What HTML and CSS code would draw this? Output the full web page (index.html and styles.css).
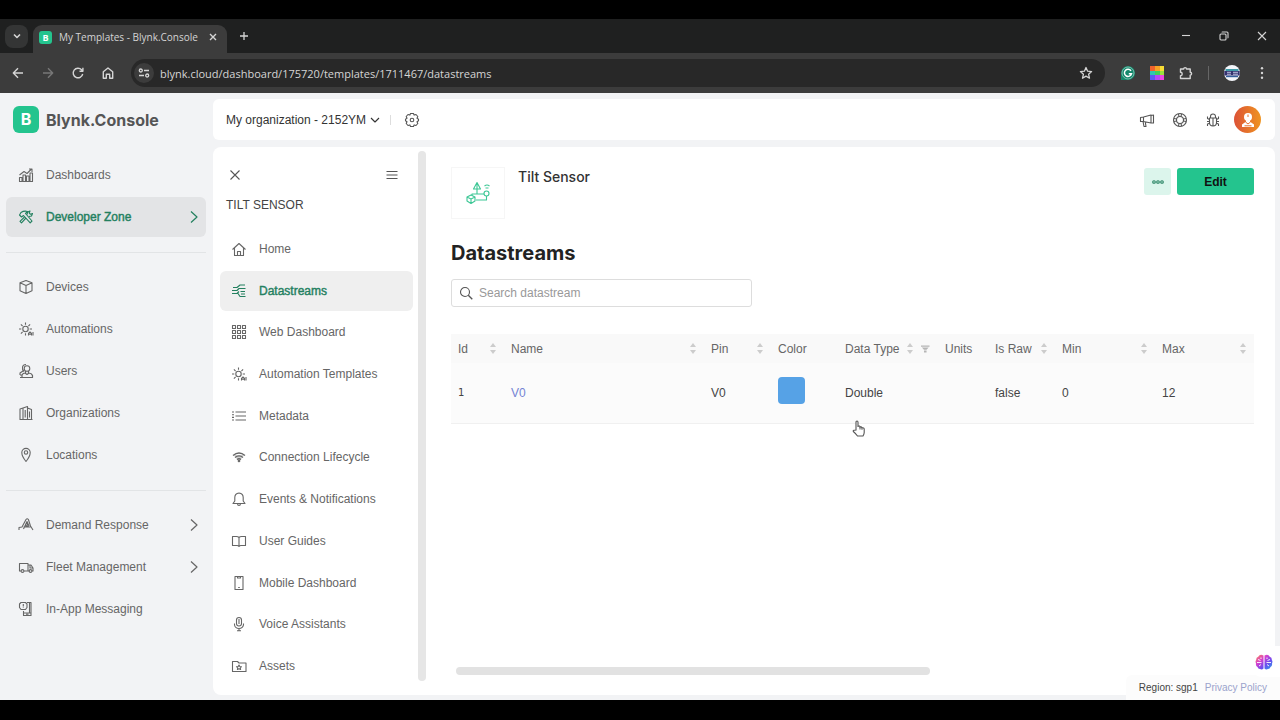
FILE: index.html
```html
<!DOCTYPE html>
<html lang="en">
<head>
  <meta charset="UTF-8">
  <meta name="viewport" content="width=device-width, initial-scale=1">
  <title>My Templates - Blynk.Console</title>
  <link rel="stylesheet" href="styles.css">
</head>
<body>

<!-- Browser window -->
<header class="browser">
  <div class="tab-strip">
    <button class="tab-search" aria-label="Search tabs">
      <svg class="icon" width="10" height="10" viewBox="0 0 10 10"><path d="M2 3.5l3 3 3-3" stroke-width="1.6"/></svg>
    </button>
    <div class="tab">
      <span class="favicon">B</span>
      <span class="tab-title">My Templates - Blynk.Console</span>
      <button class="tab-close" aria-label="Close tab">
        <svg class="icon" width="8" height="8" viewBox="0 0 8 8"><path d="M1 1l6 6M7 1l-6 6" stroke-width="1.4"/></svg>
      </button>
    </div>
    <button class="new-tab" aria-label="New tab">
      <svg class="icon" width="10" height="10" viewBox="0 0 10 10"><path d="M5 1v8M1 5h8" stroke-width="1.3"/></svg>
    </button>
    <div class="window-buttons">
      <button aria-label="Minimize"><svg class="icon" width="10" height="10" viewBox="0 0 10 10"><path d="M1 4.5h8"/></svg></button>
      <button aria-label="Restore"><svg class="icon" width="10" height="10" viewBox="0 0 10 10"><rect x="1" y="3" width="6" height="6" rx="1"/><path d="M3 1.500Q3 1 3.500 1H8q1 0 1 1v4.500q0 .5-.5.500"/></svg></button>
      <button aria-label="Close"><svg class="icon" width="10" height="10" viewBox="0 0 10 10"><path d="M1 1l8 8M9 1l-8 8"/></svg></button>
    </div>
  </div>

  <div class="toolbar">
    <button aria-label="Back"><svg class="icon" width="14" height="14" viewBox="0 0 14 14"><path d="M12 7H2.500M7 2.300L2.300 7 7 11.700" stroke-width="1.4"/></svg></button>
    <button class="dim" aria-label="Forward"><svg class="icon" width="14" height="14" viewBox="0 0 14 14"><path d="M2 7h9.500M7 2.300L11.700 7 7 11.700" stroke-width="1.4"/></svg></button>
    <button aria-label="Reload"><svg class="icon" width="14" height="14" viewBox="0 0 14 14"><path d="M11.700 8A4.800 4.800 0 1 1 10.600 3.800L11.800 5M11.900 1.800V5.200H8.500" stroke-width="1.4"/></svg></button>
    <button aria-label="Home page"><svg class="icon" width="14" height="14" viewBox="0 0 14 14"><path d="M2.300 5.800L7 2l4.700 3.800V12.300H8.700V8.200H5.300v4.100h-3z" stroke-width="1.4"/></svg></button>
    <div class="address">
      <span class="site-info"><svg class="icon" width="12" height="12" viewBox="0 0 12 12"><g stroke-width="1.300"><circle cx="2.800" cy="3.500" r="1.500"/><path d="M6 3.500h5M1 8.500h5"/><circle cx="9.200" cy="8.500" r="1.500"/></g></svg></span>
      <input type="text" aria-label="Address" value="blynk.cloud/dashboard/175720/templates/1711467/datastreams">
      <button aria-label="Bookmark"><svg class="icon" width="14" height="14" viewBox="0 0 14 14"><path d="M7 1.500l1.600 3.700 4 .4-3 2.700.9 3.900L7 10.100l-3.500 2.100.9-3.900-3-2.700 4-.4z" stroke-width="1.300"/></svg></button>
    </div>
    <div class="extensions">
      <svg width="14" height="14" viewBox="0 0 14 14"><path d="M7 0a7 7 0 1 1 0 14H0V7a7 7 0 0 1 7-7z" fill="#14876b"/><circle cx="7" cy="7" r="6" fill="none" stroke="#b9e4d8" stroke-width=".6"/><path d="M10 4.800A3.600 3.600 0 1 0 10.500 7.800H7.800" fill="none" stroke="#fff" stroke-width="1.500"/></svg>
      <svg width="14" height="14" viewBox="0 0 14 14"><path fill="#f0632d" d="M0 0h5v5H0z"/><path fill="#f7a325" d="M5 0h5v5H5z"/><path fill="#f7dc35" d="M10 0h4v5h-4z"/><path fill="#2fc6b0" d="M0 5h5v4H0z"/><path fill="#3fd35a" d="M5 5h5v4H5z"/><path fill="#9be23a" d="M10 5h4v4h-4z"/><path fill="#5a5cf0" d="M0 9h5v5H0z"/><path fill="#b44af5" d="M5 9h5v5H5z"/><path fill="#ee45e4" d="M10 9h4v5h-4z"/></svg>
      <svg class="icon" width="14" height="14" viewBox="0 0 14 14"><path d="M1.500 3h3.200a1.400 1.400 0 1 1 2.800 0h3.700v3.300a1.400 1.400 0 1 1 0 2.800v3.400H1.500V9.700a1.700 1.700 0 0 0 0-3.400z" stroke-width="1.400"/></svg>
      <span class="separator"></span>
      <svg width="16" height="16" viewBox="0 0 16 16"><circle cx="8" cy="8" r="8" fill="#f4f6fb"/><path d="M1.500 4h13v2.500h-13z" fill="#3d9aa8"/><path d="M.3 6h15.400v4.500H.3z" fill="#35326e"/><path d="M3 7.300h4M3 9.200h4M9 7.300h5M9 9.200h5" stroke="#dfe4ff" stroke-width=".8"/><path d="M2 11.500h12" stroke="#355e9c" stroke-width="1.400"/></svg>
      <svg width="14" height="14" viewBox="0 0 14 14" fill="#d5d5d5"><circle cx="7" cy="2.200" r="1.200"/><circle cx="7" cy="7" r="1.200"/><circle cx="7" cy="11.800" r="1.200"/></svg>
    </div>
  </div>
</header>

<!-- Console -->
<div class="app">
  <aside class="sidebar">
    <a class="brand" href="#"><span class="brand-mark">B</span>Blynk.Console</a>
    <nav class="nav">
      <a class="nav-item" href="#">
        <svg class="icon" width="16" height="16" viewBox="0 0 16 16"><path d="M1.500 14.500v-4h2.500v4zM5 14.500V8h2.500v6.500zM8.500 14.500V9H11v5.500zM12 14.500V6h2.500v8.500zM1.500 8L6 4.500 9 6.500l4.500-4.500M11 2h3v3"/></svg>
        Dashboards
      </a>
      <a class="nav-item active" href="#">
        <svg class="icon" width="16" height="16" viewBox="0 0 16 16"><path d="M1.500 6L3 3.500Q6 1.500 9.500 2.500L7.500 4.500 14 12l-1.800 1.800L5.500 6.500 3.500 8z"/><path d="M11 7.500l2.500-.5 1-2.500-2 .8-1.300-1.300.8-2-2.300 1L9 5.500M8 9l-4.500 4.800L2 12.300 6.500 8"/></svg>
        Developer Zone
        <svg class="icon chevron" width="8" height="14" viewBox="0 0 8 14"><path d="M1 1.500L7 7l-6 5.500" stroke-width="1.200"/></svg>
      </a>
      <hr>
      <a class="nav-item" href="#">
        <svg class="icon" width="16" height="16" viewBox="0 0 16 16"><path d="M8 1.500l6 2.300v8L8 14.500 2 11.800v-8zM2 3.800L8 6.500l6-2.700M8 6.500v8"/></svg>
        Devices
      </a>
      <a class="nav-item" href="#">
        <svg class="icon" width="16" height="16" viewBox="0 0 16 16"><circle cx="7.500" cy="8" r="2.700"/><path d="M7.500 1.500v2.300M7.500 12.200v2.300M1 8h2.300M11.700 8H14M2.900 3.400l1.700 1.700M12.100 3.400l-1.700 1.700M2.900 12.600l1.700-1.700M10.500 14.500v-2l1.500-1.500 1.500 1.500v2M10.500 13.300h3M15 11v3.500"/></svg>
        Automations
      </a>
      <a class="nav-item" href="#">
        <svg class="icon" width="16" height="16" viewBox="0 0 16 16"><path d="M6 8.500Q4 6.500 4.500 4 5 1.500 8 1.500M2 12V10l3-2"/><circle cx="9" cy="5.500" r="2.800"/><path d="M4 14.500V12q1-2 3-2l2 1.500 2-1.500q3 .5 3.500 2.500v2zM2 14.500h12M7.500 8v2M10.500 8v2M2 12h2" stroke-width="1.200"/></svg>
        Users
      </a>
      <a class="nav-item" href="#">
        <svg class="icon" width="16" height="16" viewBox="0 0 16 16"><path d="M2 14.500V4l3-1v11.500M5 3l4.500-1.500v13M9.500 3l4 1.500v10M1.500 14.500h13M7.200 5v7.500M11.500 6.500v6"/></svg>
        Organizations
      </a>
      <a class="nav-item" href="#">
        <svg class="icon" width="16" height="16" viewBox="0 0 16 16"><path d="M8 14.500Q3.800 9.500 3.800 5.600a4.200 4.200 0 0 1 8.400 0Q12.200 9.500 8 14.500z"/><circle cx="8" cy="5.500" r="1.700"/></svg>
        Locations
      </a>
      <hr>
      <a class="nav-item" href="#">
        <svg class="icon" width="16" height="16" viewBox="0 0 16 16"><path d="M1 13v-2.500l3-.5 4-7.500q1.200-1.500 2.400 0L12.500 9l2.500 4M5.500 12L9 4.500l2 4.500M5.500 10h7M9.200 6v3.500M7.700 8.500l1.500 1.500 1.500-1.500"/></svg>
        Demand Response
        <svg class="icon chevron" width="8" height="14" viewBox="0 0 8 14"><path d="M1 1.500L7 7l-6 5.500" stroke-width="1.200"/></svg>
      </a>
      <a class="nav-item" href="#">
        <svg class="icon" width="16" height="16" viewBox="0 0 16 16"><path d="M3 12H1.500V4.500H10V12H6M10 6h3l2 3v3h-1M12 12h-2M12 6v3h3"/><circle cx="4.500" cy="12" r="1.400"/><circle cx="12.500" cy="12" r="1.400"/></svg>
        Fleet Management
        <svg class="icon chevron" width="8" height="14" viewBox="0 0 8 14"><path d="M1 1.500L7 7l-6 5.500" stroke-width="1.200"/></svg>
      </a>
      <a class="nav-item" href="#">
        <svg class="icon" width="16" height="16" viewBox="0 0 16 16"><path d="M9 1.500h4v13H5.500V10M11.500 1.500v10.500M6 12h7M3 1.500h4.500L9 3v3.500L7.500 8.500H3L1.500 6.500V3zM5.300 3v2.500M5.300 6.500v.6M8 13.300h2.500"/></svg>
        In-App Messaging
      </a>
    </nav>
  </aside>

  <div class="workspace">
    <div class="topbar">
      <button class="org-picker">
        My organization - 2152YM
        <svg class="icon" width="10" height="8" viewBox="0 0 10 8"><path d="M1 2l4 4 4-4"/></svg>
      </button>
      <span class="separator"></span>
      <button aria-label="Settings"><svg class="icon" width="16" height="16" viewBox="0 0 16 16"><path d="M6.500 1.500h3l.6 1.600 1.900-.6 1.800 2-.8 1.800 1.500.9v1.600l-1.500.9.8 1.800-1.800 2-1.900-.6-.6 1.600h-3l-.6-1.600-1.900.6-1.800-2L3 9.700l-1.500-.9V7.200L3 6.300l-.8-1.800 1.800-2 1.900.6z"/><circle cx="8" cy="8" r="1.800"/></svg></button>
      <div class="topbar-actions">
        <button aria-label="News"><svg class="icon" width="16" height="16" viewBox="0 0 16 16"><path d="M1.500 5.500l3-.5L12 3v8L4.500 9.500l-3 0zM12 3.500l2.500-.5v8l-2.500 0M4.500 5v4.500M4 9.500l1 5h2l-.7-4.500M14.500 5.500v2"/></svg></button>
        <button aria-label="Help"><svg class="icon" width="16" height="16" viewBox="0 0 16 16"><circle cx="8" cy="8" r="6.500"/><circle cx="8" cy="8" r="3.500"/><path d="M6.500 1.800l.5 2.800M9.500 1.800L9 4.600M6.500 14.200l.5-2.800M9.500 14.200L9 11.400M1.800 6.500l2.800.5M1.800 9.500L4.600 9M14.200 6.500l-2.800.5M14.200 9.500L11.400 9"/></svg></button>
        <button aria-label="Report a bug"><svg class="icon" width="16" height="16" viewBox="0 0 16 16"><path d="M4.500 6h7v4.500a3.500 3.500 0 0 1-7 0zM5.500 6V4.500a2.500 2.500 0 0 1 5 0V6M8 6v8M2.500 4.500v2l2 1M13.500 4.500v2l-2 1M2 9.500h2.500M11.500 9.500H14M2.500 14v-2l2-.8M13.500 14v-2l-2-.8"/></svg></button>
        <button class="avatar" aria-label="Account">
          <svg width="16" height="16" viewBox="0 0 16 16"><circle cx="8" cy="5" r="4" fill="#fff"/><path d="M6 8h4v2.500H6zM2 15v-2.500L5.500 10h5l3.500 2.500V15z" fill="#fff"/><path d="M8 2.500V5M5.500 10L8 12l2.500-2M4.500 13.800h7" stroke="#e8702c" fill="none"/></svg>
        </button>
      </div>
    </div>

    <div class="content">
      <aside class="submenu">
        <div class="submenu-body">
          <div class="submenu-head">
            <button aria-label="Close"><svg class="icon" width="12" height="12" viewBox="0 0 12 12"><path d="M1.500 1.500l9 9M10.500 1.500l-9 9"/></svg></button>
            <button aria-label="Collapse menu"><svg class="icon" width="12" height="12" viewBox="0 0 12 12"><path d="M.5 2.500h11M.5 6h11M.5 9.500h11"/></svg></button>
          </div>
          <h2 class="submenu-title">TILT SENSOR</h2>
          <nav class="submenu-nav">
            <a class="submenu-item" href="#"><svg class="icon" width="16" height="16" viewBox="0 0 16 16"><path d="M1.500 8.500L8 2.500l6.500 6M3.500 7v7.500h9V7M6.500 14.500v-4h3v4"/></svg>Home</a>
            <a class="submenu-item active" href="#"><svg class="icon" width="16" height="16" viewBox="0 0 16 16"><path d="M2 4.500h4l3-2.500h5M1 7.500h5l2-2h6.500M9.500 8.500H14M1 10.500h5l2-2M3 10.500h4l2 3h5.500M10 11h4"/></svg>Datastreams</a>
            <a class="submenu-item" href="#"><svg class="icon" width="16" height="16" viewBox="0 0 16 16"><path d="M1.500 1.500h3v3h-3zM6.500 1.500h3v3h-3zM11.500 1.500h3v3h-3zM1.500 6.500h3v3h-3zM6.500 6.500h3v3h-3zM11.500 6.500h3v3h-3zM1.500 11.500h3v3h-3zM6.500 11.500h3v3h-3zM11.500 11.500h3v3h-3z"/></svg>Web Dashboard</a>
            <a class="submenu-item" href="#"><svg class="icon" width="16" height="16" viewBox="0 0 16 16"><circle cx="7.500" cy="8" r="2.700"/><path d="M7.500 1.500v2.300M7.500 12.200v2.300M1 8h2.300M11.700 8H14M2.900 3.400l1.700 1.700M12.100 3.400l-1.700 1.700M2.900 12.600l1.700-1.700M10.500 14.500v-2l1.500-1.500 1.500 1.500v2M10.500 13.300h3M15 11v3.500"/></svg>Automation Templates</a>
            <a class="submenu-item" href="#"><svg class="icon" width="16" height="16" viewBox="0 0 16 16"><path d="M1 4h2M1 6.700h2M1 9.400h2M1 12h2M4.500 4h10.500M4.500 8h10.500M4.500 12h10.500"/></svg>Metadata</a>
            <a class="submenu-item" href="#"><svg class="icon" width="16" height="16" viewBox="0 0 16 16"><path d="M2 6.500q6-5 12 0M4 8.500q4-3.300 8 0M6 10.500q2-1.500 4 0" stroke-width="1.400"/><path d="M3 6h10L8 13z" fill="currentColor" fill-opacity=".3" stroke="none"/><circle cx="8" cy="12" r=".8"/></svg>Connection Lifecycle</a>
            <a class="submenu-item" href="#"><svg class="icon" width="16" height="16" viewBox="0 0 16 16"><path d="M2 12.500h12l-1.800-2.500V6.500q0-4-4.200-4.500-4.200.5-4.200 4.500V10zM6.500 12.500q0 2 1.500 2t1.500-2"/></svg>Events &amp; Notifications</a>
            <a class="submenu-item" href="#"><svg class="icon" width="16" height="16" viewBox="0 0 16 16"><path d="M8 4.500Q7 3.500 5.500 3.500h-4v9h4.500q1.500 0 2 1 .5-1 2-1h4.500v-9h-4Q9 3.500 8 4.500v9"/></svg>User Guides</a>
            <a class="submenu-item" href="#"><svg class="icon" width="16" height="16" viewBox="0 0 16 16"><path d="M4 1.500h8v13H4zM6.500 2v1h3V2M7.200 12.500h1.600"/></svg>Mobile Dashboard</a>
            <a class="submenu-item" href="#"><svg class="icon" width="16" height="16" viewBox="0 0 16 16"><rect x="5.500" y="1.500" width="5" height="8.500" rx="2.500"/><path d="M3.500 7.500v1a4.500 4 0 0 0 9 0v-1M8 12.500v2.500M6 14.800h4M8 3v5"/></svg>Voice Assistants</a>
            <a class="submenu-item" href="#"><svg class="icon" width="16" height="16" viewBox="0 0 16 16"><path d="M1.500 13.500v-10h5l1.500 1.500h7v8.500zM8 7l.8 1.500 1.700.2-1.200 1.100.3 1.700L8 10.700l-1.600.8.3-1.700-1.200-1.100 1.700-.2z"/></svg>Assets</a>
          </nav>
        </div>
        <div class="scrollbar-y"></div>
      </aside>

      <main class="main">
        <div class="template-head">
          <div class="template-logo">
            <svg class="icon" width="26" height="24" viewBox="0 0 26 24"><path d="M12 1.500L15.500 8h-7zM12 3v10M9 8h6M19.500 5q2.500-2 5 0M20.500 7h3"/><circle cx="21.500" cy="12.500" r="2.500"/><path d="M7 14.500V13h12M21.500 15v4H11M6 14l4 2v4l-4 2.500L2 20v-4zM2 16l4 2 4-2M6 18v4.500"/></svg>
          </div>
          <h1 class="template-name">Tilt Sensor</h1>
          <div class="template-actions">
            <button class="more" aria-label="More"><svg class="icon" width="14" height="6" viewBox="0 0 14 6"><circle cx="3" cy="3" r="1.300"/><circle cx="7" cy="3" r="1.300"/><circle cx="11" cy="3" r="1.300"/></svg></button>
            <button class="edit">Edit</button>
          </div>
        </div>

        <h2 class="page-title">Datastreams</h2>
        <label class="search">
          <svg class="icon" width="14" height="14" viewBox="0 0 14 14"><circle cx="6" cy="6" r="4.500"/><path d="M9.300 9.300l4 4" stroke-width="1.300"/></svg>
          <input type="text" placeholder="Search datastream" aria-label="Search datastream">
        </label>

        <table class="streams">
          <colgroup>
            <col class="col-id"><col class="col-name"><col class="col-sm"><col class="col-sm"><col class="col-md"><col class="col-xs"><col class="col-sm"><col class="col-md"><col>
          </colgroup>
          <thead>
            <tr>
              <th><div class="th">Id<span class="sort"></span></div></th>
              <th><div class="th">Name<span class="sort"></span></div></th>
              <th><div class="th">Pin<span class="sort"></span></div></th>
              <th><div class="th">Color</div></th>
              <th><div class="th">Data Type<span class="sort"></span><svg class="filter" width="10" height="8" viewBox="0 0 10 8"><path d="M0 0h10v1.500H0zM1 2.300h8L6.500 5h-3zM3.500 5.700h3V8h-3z" fill="#b5b5b5"/></svg></div></th>
              <th><div class="th">Units</div></th>
              <th><div class="th">Is Raw<span class="sort"></span></div></th>
              <th><div class="th">Min<span class="sort"></span></div></th>
              <th><div class="th">Max<span class="sort"></span></div></th>
            </tr>
          </thead>
          <tbody>
            <tr>
              <td class="id">1</td>
              <td><a href="#">V0</a></td>
              <td>V0</td>
              <td><span class="swatch"></span></td>
              <td>Double</td>
              <td></td>
              <td>false</td>
              <td>0</td>
              <td>12</td>
            </tr>
          </tbody>
        </table>
        <div class="scrollbar-x"></div>
      </main>
    </div>
  </div>

  <footer class="footer">
    <span>Region: sgp1</span>
    <a href="#">Privacy Policy</a>
  </footer>

  <button class="assistant" aria-label="Assistant">
    <svg width="18" height="16" viewBox="0 0 18 16">
      <defs><linearGradient id="brain" x1="0" y1="0" x2="1" y2="1"><stop offset="0" stop-color="#ff8a4c"/><stop offset=".35" stop-color="#d63fd0"/><stop offset=".65" stop-color="#6a4df0"/><stop offset="1" stop-color="#2aa5e8"/></linearGradient></defs>
      <path d="M8.500 1.500v13q-1.500 1.500-3.500.5-2 0-2.500-2Q.5 12 1 9.500 0 7.500 1.200 6 1 3.500 3.200 2.800 5-.5 8.500 1.500zM9.500 1.500q3.500-2 5.300 1.300Q17 3.500 16.800 6 18 7.500 17 9.500q.5 2.500-1.500 3.500-.5 2-2.500 2-2 1-3.500-.5z" fill="url(#brain)"/>
      <path d="M3 5.500l2.500 1M2 8.500h4.500M4 12l2-1.500M15 5.500l-2.500 1M11.500 8.500H16M14 12l-2-1.500M6 3.500v1.500M12 3.500v1.500" stroke="#fff" stroke-width=".9" fill="none"/>
    </svg>
  </button>

  <svg class="cursor" width="14" height="18" viewBox="0 0 14 18"><path d="M4 10V2.200q0-1.200 1-1.200t1 1.200V7l.2-1q1.600-.3 1.800 1 1.600-.4 2 .8 2-.3 2.200 1.200v3.500q0 1.500-1.200 3.500H5.500Q4 13.800 1.300 11.500q-.3-1.500 1-1.300z" fill="#fff" stroke="#555" stroke-width="1.100"/><path d="M8 7v2.500M10 7.800v2" stroke="#555"/></svg>
</div>

</body>
</html>
```

FILE: styles.css
```css
* {
  box-sizing: border-box;
}
body {
  margin: 0;
  padding: 19px 0 20px;
  height: 100vh;
  display: flex;
  flex-direction: column;
  background: #000;
  font-family: "Liberation Sans", Arial, sans-serif;
  font-size: 12px;
  color: #444;
}
button {
  display: flex;
  align-items: center;
  justify-content: center;
  padding: 0;
  border: none;
  background: none;
  color: inherit;
  font: inherit;
  cursor: pointer;
}
a {
  text-decoration: none;
}
h1, h2 {
  margin: 0;
}
.icon {
  flex: none;
  fill: none;
  stroke: currentColor;
  stroke-width: 1.1;
  stroke-linejoin: round;
}

/* Browser window */
.browser {
  font-family: "Open Sans", sans-serif;
  color: #d5d5d5;
}
.tab-strip {
  display: flex;
  align-items: center;
  height: 34px;
  padding: 0 13px 0 5px;
  background: #1f2020;
}
.tab-search {
  width: 23px;
  height: 23px;
  border-radius: 8px;
  background: #343535;
}
.tab {
  display: flex;
  align-items: center;
  align-self: flex-end;
  width: 194px;
  height: 28px;
  margin-left: 5px;
  padding: 0 10px 4px 6px;
  border-radius: 9px 9px 0 0;
  background: #3c3c3c;
  font-size: 10px;
}
.favicon {
  flex: none;
  width: 13px;
  height: 13px;
  margin-right: 7px;
  border-radius: 3px;
  background: #24c48e;
  color: #fff;
  font-size: 9px;
  font-weight: bold;
  line-height: 13px;
  text-align: center;
}
.tab-title {
  flex: 1;
  white-space: nowrap;
}
.new-tab {
  margin-left: 12px;
}
.window-buttons {
  display: flex;
  gap: 28px;
  margin-left: auto;
}
.toolbar {
  display: flex;
  align-items: center;
  gap: 16px;
  height: 40px;
  padding: 0 11px;
  background: #3c3c3c;
}
.toolbar .dim {
  color: #777;
}
.address {
  flex: 1;
  display: flex;
  align-items: center;
  height: 28px;
  padding: 0 12px 0 3px;
  border-radius: 14px;
  background: #282828;
}
.site-info {
  display: flex;
  align-items: center;
  justify-content: center;
  width: 20px;
  height: 20px;
  border-radius: 10px;
  background: #3c3c3c;
}
.address input {
  flex: 1;
  padding: 0 6px;
  border: none;
  background: none;
  color: #d5d5d5;
  font: 11px "Open Sans", sans-serif;
}
.extensions {
  display: flex;
  align-items: center;
  gap: 15px;
}
.extensions .separator {
  width: 1px;
  height: 14px;
  background: #666;
}

/* Console */
.app {
  position: relative;
  flex: 1;
  display: flex;
  min-height: 0;
  background: #f2f3f5;
}
.sidebar {
  width: 213px;
  padding: 13px 7px 0 6px;
}
.brand {
  display: flex;
  align-items: center;
  gap: 7px;
  padding-left: 7px;
  color: #555;
  font-family: Inter, sans-serif;
  font-size: 16px;
  font-weight: bold;
}
.brand-mark {
  width: 26px;
  height: 27px;
  border-radius: 6px;
  background: #24c48e;
  color: #fff;
  line-height: 27px;
  text-align: center;
}
.nav {
  display: flex;
  flex-direction: column;
  gap: 2px;
  margin-top: 22px;
}
.nav hr {
  width: 100%;
  margin: 13px 0 12px;
  border: none;
  border-top: 1px solid #e2e4e6;
}
.nav-item {
  display: flex;
  align-items: center;
  gap: 12px;
  height: 40px;
  padding: 0 8px 0 12px;
  border-radius: 6px;
  color: #666;
}
.nav-item.active {
  background: #e3e4e6;
  color: #23805f;
  -webkit-text-stroke: 0.4px;
}
.chevron {
  margin-left: auto;
}
.workspace {
  flex: 1;
  display: flex;
  flex-direction: column;
  gap: 7px;
  min-width: 0;
  padding: 6px 5px 5px 0;
}
.topbar {
  display: flex;
  align-items: center;
  gap: 13px;
  height: 41px;
  padding: 0 14px 0 13px;
  border-radius: 6px;
  background: #fff;
  color: #555;
}
.org-picker {
  gap: 4px;
  color: #333;
}
.topbar .separator {
  width: 1px;
  height: 10px;
  margin-left: -3px;
  background: #ddd;
}
.topbar-actions {
  display: flex;
  align-items: center;
  gap: 17px;
  margin-left: auto;
}
.avatar {
  width: 27px;
  height: 27px;
  margin-left: -4px;
  border-radius: 50%;
  background: linear-gradient(90deg, #dc5236, #ef9420);
}
.content {
  flex: 1;
  display: flex;
  min-height: 0;
  border-radius: 8px;
  background: #fff;
}

/* Template menu */
.submenu {
  display: flex;
  width: 213px;
  padding: 4px 0 14px;
}
.submenu-body {
  flex: 1;
  display: flex;
  flex-direction: column;
  padding: 18px 5px 0 7px;
}
.submenu-head {
  display: flex;
  justify-content: space-between;
  padding: 0 15px 0 9px;
  color: #555;
}
.submenu-title {
  margin: 17px 0 17px;
  padding-left: 6px;
  color: #444;
  font-size: 12px;
  font-weight: normal;
}
.submenu-nav {
  flex: 1;
  display: flex;
  flex-direction: column;
  justify-content: space-between;
  margin-bottom: -5px;
}
.submenu-item {
  display: flex;
  align-items: center;
  gap: 12px;
  height: 40px;
  padding-left: 11px;
  border-radius: 6px;
  color: #666;
  white-space: nowrap;
}
.submenu-item.active {
  background: #efefef;
  color: #23805f;
  -webkit-text-stroke: 0.4px;
}
.scrollbar-y {
  width: 8px;
  border-radius: 4px;
  background: #e6e6e6;
}

/* Datastreams */
.main {
  flex: 1;
  display: flex;
  flex-direction: column;
  min-width: 0;
  padding: 20px 21px 20px 25px;
}
.template-head {
  display: flex;
  align-items: flex-start;
  gap: 13px;
}
.template-logo {
  display: flex;
  align-items: center;
  justify-content: center;
  width: 54px;
  height: 52px;
  border: 1px solid #f6f6f6;
  color: #3cc795;
}
.template-name {
  color: #333;
  font-family: Inter, sans-serif;
  font-size: 14px;
  font-weight: 500;
  line-height: 20px;
}
.template-actions {
  display: flex;
  gap: 6px;
  margin-left: auto;
  margin-top: 1px;
}
.more {
  width: 27px;
  height: 27px;
  border-radius: 3px;
  background: #dcf5ec;
  color: #23805f;
}
.edit {
  width: 77px;
  height: 27px;
  border-radius: 3px;
  background: #24c48e;
  color: #111;
  font-weight: bold;
}
.page-title {
  margin-top: 20px;
  color: #222;
  font-family: Inter, sans-serif;
  font-size: 20px;
  font-weight: bold;
  line-height: 28px;
}
.search {
  display: flex;
  align-items: center;
  gap: 6px;
  width: 301px;
  height: 28px;
  margin-top: 12px;
  padding: 0 7px;
  border: 1px solid #ddd;
  border-radius: 3px;
  color: #555;
}
.search input {
  flex: 1;
  padding: 0;
  border: none;
  background: none;
  font: inherit;
}
.search input::placeholder {
  color: #999;
}
.streams {
  width: 100%;
  margin-top: 27px;
  border-collapse: collapse;
  table-layout: fixed;
  color: #444;
}
.col-id {
  width: 53px;
}
.col-name {
  width: 200px;
}
.col-sm {
  width: 67px;
}
.col-md {
  width: 100px;
}
.col-xs {
  width: 50px;
}
.streams th {
  height: 29px;
  padding: 0 8px 0 7px;
  background: #f9f9f9;
  color: #666;
  font-weight: normal;
  text-align: left;
  white-space: nowrap;
}
.th {
  display: flex;
  align-items: center;
  gap: 8px;
}
.sort {
  display: flex;
  flex-direction: column;
  gap: 3px;
  margin-left: auto;
}
.sort::before, .sort::after {
  content: "";
  border: 3px solid transparent;
}
.sort::before {
  border-top: none;
  border-bottom: 4px solid #ccc;
}
.sort::after {
  border-bottom: none;
  border-top: 4px solid #ccc;
}
.streams td {
  height: 60px;
  padding: 0 7px;
  border-bottom: 1px solid #f0f0f0;
  background: #fbfbfb;
}
.streams .id {
  font-family: "DejaVu Sans", sans-serif;
  font-size: 10px;
}
.streams a {
  color: #7484d4;
}
.swatch {
  display: block;
  width: 27px;
  height: 27px;
  margin-bottom: 4px;
  border-radius: 4px;
  background: #56a2e6;
}
.scrollbar-x {
  width: 59%;
  height: 8px;
  margin: auto 0 0 5px;
  border-radius: 4px;
  background: #e2e2e2;
}

/* Layers over the page */
.footer {
  position: absolute;
  right: 0;
  bottom: 0;
  display: flex;
  gap: 7px;
  padding: 7px 13px;
  border-radius: 6px 0 0;
  background: #fcfcfc;
  font-size: 10px;
}
.footer a {
  color: #9ba3cc;
}
.assistant {
  position: absolute;
  right: 0;
  bottom: 23px;
  width: 32px;
  height: 31px;
  border-radius: 16px 0 0 16px;
  background: #fff;
}
.cursor {
  position: absolute;
  left: 852px;
  top: 327px;
}
```
